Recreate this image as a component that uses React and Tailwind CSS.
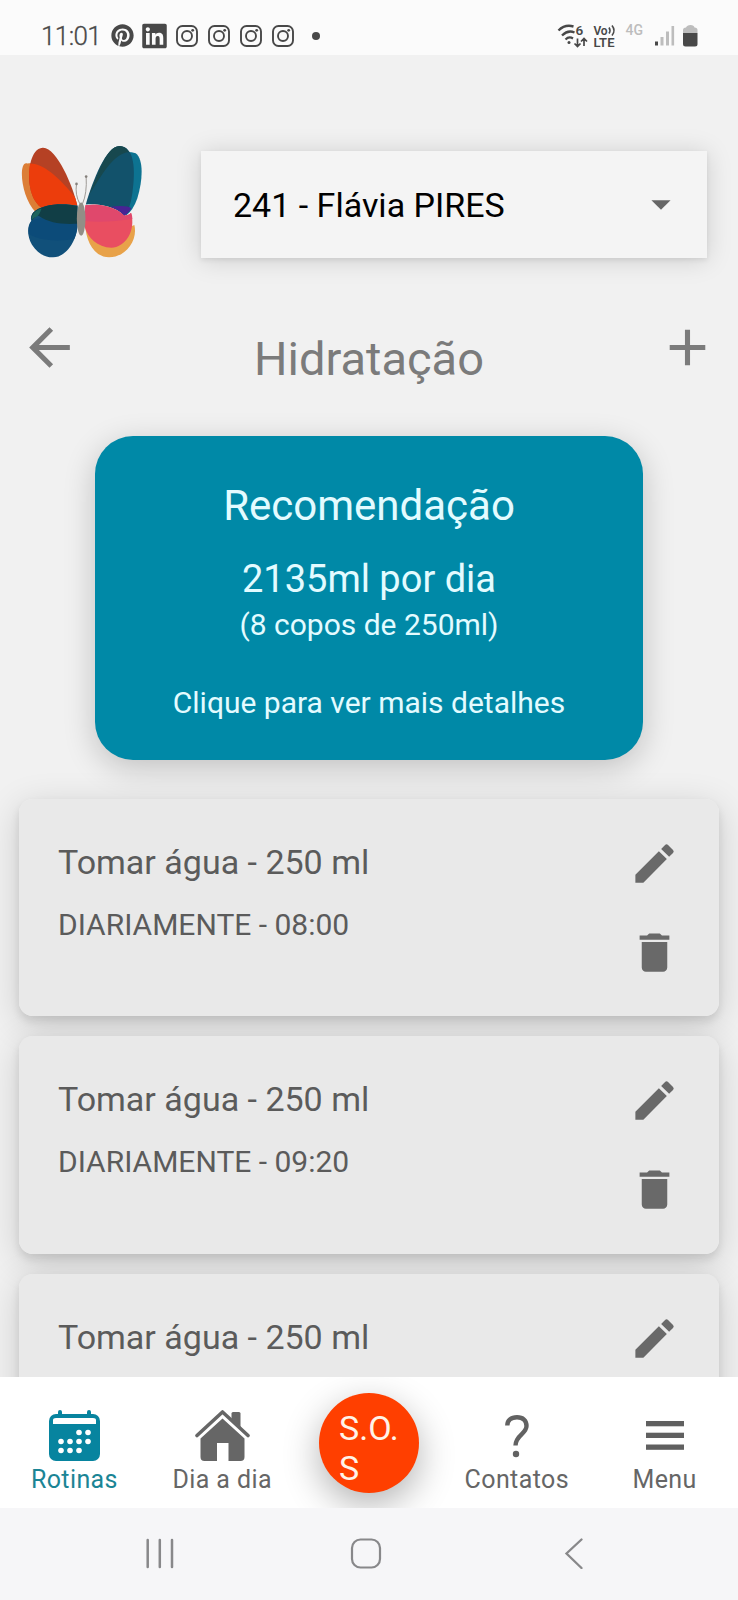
import { FaLinkedin, FaPinterest } from "react-icons/fa";
import { MdAdd, MdArrowBack, MdArrowDropDown, MdDelete, MdEdit } from "react-icons/md";

const routines = [
  { id: 1, title: "Tomar água - 250 ml", schedule: "DIARIAMENTE - 08:00" },
  { id: 2, title: "Tomar água - 250 ml", schedule: "DIARIAMENTE - 09:20" },
  { id: 3, title: "Tomar água - 250 ml" },
];

const InstagramIcon = () => (
  <svg viewBox="0 0 22 22" className="w-[22px] h-[22px]" fill="none" stroke="currentColor">
    <rect x="1" y="1" width="20" height="20" rx="5.5" strokeWidth="1.9" />
    <circle cx="11" cy="11" r="5" strokeWidth="1.9" />
    <circle cx="16.7" cy="5.3" r="1.4" fill="currentColor" stroke="none" />
  </svg>
);

const StatusBar = () => (
  <div className="h-[55px] shrink-0 bg-[#fbfbfb] flex items-center pt-4 pl-[41px] pr-[39px] text-[#484848]">
    <span className="w-[70px] text-[26px] leading-none font-light tracking-[-0.6px] [-webkit-text-stroke:0.3px]">11:01</span>
    <FaPinterest className="w-[23px] h-[23px]" />
    <FaLinkedin className="w-[25px] h-[28px] ml-[8px]" />
    <div className="flex gap-[10px] ml-[8.5px]">
      <InstagramIcon />
      <InstagramIcon />
      <InstagramIcon />
      <InstagramIcon />
    </div>
    <span className="w-2 h-2 rounded-full bg-current ml-[18px]" />
    <svg viewBox="0 0 142 26" className="w-[142px] h-[26px] ml-auto" fill="none" stroke="currentColor">
      {/* wifi */}
      <path d="M1.5 7.5 Q8 1 16.500 3.500" strokeWidth="2.4" />
      <path d="M5 12.5 Q11 6.500 17.500 9.500" strokeWidth="2.3" />
      <path d="M8.500 16.500 Q12 13 16 15.500" strokeWidth="2.2" />
      <circle cx="12" cy="19.500" r="1.5" fill="currentColor" stroke="none" />
      <path d="M20.500 15.500v7.500M17.500 20.500l3 3 3-3M27 23v-7.500M24 18.500l3-3 3 3" strokeWidth="1.7" />
      <text x="18.500" y="12" fontSize="13.500" fontWeight="600" fill="currentColor" stroke="none">6</text>
      {/* volte */}
      <text x="36.500" y="11.500" fontSize="12" fontWeight="600" fill="currentColor" stroke="none" textLength="14">Vo</text>
      <path d="M52 4.500q2 3 0 6M55 2.500q4 5 0 10" strokeWidth="1.6" />
      <text x="36.500" y="23.500" fontSize="13" fontWeight="600" fill="currentColor" stroke="none" textLength="21">LTE</text>
      <text x="68.500" y="12" fontSize="14" fontWeight="500" fill="#bdbdbd" stroke="none">4G</text>
      {/* signal */}
      <rect x="98" y="18.500" width="3" height="4" fill="currentColor" stroke="none" />
      <g fill="#bdbdbd" stroke="none">
        <rect x="103.500" y="14" width="3" height="8.500" />
        <rect x="109" y="8.500" width="3" height="14" />
        <rect x="114.500" y="3" width="2.600" height="19.500" />
      </g>
      {/* battery */}
      <path d="M126 10V7q0-2.500 3-2.500 1-2.500 4.500-2.500t4 2.500q3 0 3 2.500v3z" fill="#bdbdbd" stroke="none" />
      <path d="M126 10h14.500v11q0 2.500-2.500 2.500h-9.500q-2.500 0-2.500-2.500z" fill="currentColor" stroke="none" />
    </svg>
  </div>
);

const ButterflyLogo = () => (
  <svg viewBox="30 40 370 350" className="w-[123px] h-[117px] shrink-0">
    <defs>
      <clipPath id="leftUpper">
        <path d="M203 228C190 170 140 50 98 53C62 55 52 125 60 170C66 205 80 225 100 238Q150 215 203 228Z" />
      </clipPath>
      <clipPath id="rightUpper">
        <path d="M228 224C250 150 290 46 330 48C375 50 378 120 368 190Q360 245 344 257C310 225 260 222 228 224Z" />
      </clipPath>
    </defs>
    {/* upper left */}
    <path d="M78 248C30 200 25 90 52 101C90 95 130 120 190 190L120 240Z" fill="#dc7e36" />
    <path d="M203 228C190 170 140 50 98 53C62 55 52 125 60 170C66 205 80 225 100 238Q150 215 203 228Z" fill="#b54124" />
    <path d="M78 248C30 200 25 90 52 101C90 95 140 130 204 212L200 240Z" fill="#ec3d0c" clipPath="url(#leftUpper)" />
    {/* upper right */}
    <path d="M340 67Q360 64 378 70C402 88 400 150 383 205Q370 242 350 256L320 230Z" fill="#0d7391" />
    <path d="M228 224C250 150 290 46 330 48C375 50 378 120 368 190Q360 245 344 257C310 225 260 222 228 224Z" fill="#12526b" />
    <path d="M238 195C265 130 295 40 330 45Q348 48 358 66C310 72 280 130 238 195Z" fill="#17484e" clipPath="url(#rightUpper)" />
    {/* lower right */}
    <path d="M226 285C228 330 250 382 298 383C350 382 385 330 374 286L340 300Z" fill="#e8a249" />
    <path d="M228 226C260 222 310 225 344 257Q358 257 364 249C380 305 345 354 305 354C262 352 235 325 224 290Z" fill="#e94e61" />
    <path d="M226 226C255 222 310 225 344 257Q358 257 364 249Q368 258 368 268C320 275 270 278 225 274Z" fill="#e0486c" />
    <path d="M302 231Q350 225 365 235Q355 252 344 257Q325 238 302 231Z" fill="#482394" />
    {/* lower left */}
    <path d="M203 228C160 218 95 222 70 248C62 256 62 268 64 274C50 290 52 320 66 345C82 370 105 384 130 383C175 382 205 320 203 282Z" fill="#11507a" />
    <path d="M64 274Q54 290 56 312C90 335 150 335 193 328Q203 305 203 278L100 262Z" fill="#0c4b79" />
    <path d="M203 228C160 218 95 222 70 248C64 254 63 266 67 272Q76 258 86 258C120 280 150 284 203 282Z" fill="#113e46" />
    <path d="M67 257Q76 240 95 236Q91 250 82 260Q72 262 66 270Q64 262 67 257Z" fill="#1c645f" />
    <path d="M210 222Q195 195 200 162M218 222Q232 190 229 140" fill="none" stroke="#8c8782" strokeWidth="2.500" />
    <circle cx="200" cy="162" r="4" fill="#85807b" />
    <circle cx="229" cy="140" r="4" fill="#85807b" />
    <ellipse cx="214" cy="268" rx="13" ry="50" fill="#928e86" />
  </svg>
);

// shadow sits on the wrapper so it never falls on the neighbouring card
const RoutineCard = ({ item }) => (
  <div className="h-[217.3px] shrink-0 rounded-[14px] shadow-[0_5px_8px_rgba(0,0,0,0.1),0_8px_36px_rgba(0,0,0,0.16)]">
    <div className="relative z-10 h-full flex justify-between rounded-[14px] bg-[#e9e9e9] px-[39px]">
      <div className="pt-[43px] text-[#5b5b5b]">
        <h3 className="text-[34px] leading-10">{item.title}</h3>
        {item.schedule && <p className="mt-[23px] text-[30px] leading-10">{item.schedule}</p>}
      </div>
      <div className="flex flex-col items-center gap-[38px] pt-[39px] text-[#696969]">
        <button>
          <MdEdit className="w-[51px] h-[51px]" />
        </button>
        <button>
          <MdDelete className="w-[51px] h-[51px]" />
        </button>
      </div>
    </div>
  </div>
);

const CalendarIcon = () => (
  <svg viewBox="0 0 51 51" className="w-[51px] h-[51px]">
    <rect x="0" y="4" width="51" height="47" rx="7" fill="#07849f" />
    <path d="M11 6V2M40 6V2" stroke="#07849f" strokeWidth="4" strokeLinecap="round" />
    <path d="M4 14V10Q4 8 7 8H44Q47 8 47 10V14Z" fill="#fff" />
    <g fill="#fff">
      <circle cx="30" cy="22.500" r="2.800" />
      <circle cx="39" cy="22.500" r="2.800" />
      <circle cx="12" cy="31.500" r="2.800" />
      <circle cx="21" cy="31.500" r="2.800" />
      <circle cx="30" cy="31.500" r="2.800" />
      <circle cx="39" cy="31.500" r="2.800" />
      <circle cx="12" cy="40.500" r="2.800" />
      <circle cx="21" cy="40.500" r="2.800" />
      <circle cx="30" cy="40.500" r="2.800" />
    </g>
  </svg>
);

const HomeIcon = () => (
  <svg viewBox="0 0 55 51" className="w-[55px] h-[51px]" fill="#666">
    <path d="M36.500 3.500Q36.500 2 38 2H44Q45.500 2 45.500 3.500V19L36.500 10Z" />
    <path d="M2 25.500L27.500 2L53 25.500" fill="none" stroke="#666" strokeWidth="3.600" strokeLinecap="round" strokeLinejoin="round" />
    <path d="M27.500 8.500L49.500 28.500V47Q49.500 51 45.500 51H33.500V33H22V51H9.500Q5.500 51 5.500 47V28.500Z" />
  </svg>
);

const QuestionIcon = () => (
  <svg viewBox="0 0 24 51" className="w-6 h-[51px]" fill="none" stroke="#626262">
    <path d="M2.300 15.500C2.300 10.500 6 7.300 12 7.300C18 7.300 21.500 10.500 21.500 16C21.500 24 10.500 25 10.500 35.500" strokeWidth="4.400" />
    <circle cx="11" cy="44" r="3.200" fill="#626262" stroke="none" />
  </svg>
);

const MenuIcon = () => (
  <svg viewBox="0 0 38 51" className="w-[38px] h-[51px]" fill="#606060">
    <rect y="11" width="38" height="5.300" />
    <rect y="22.700" width="38" height="5.300" />
    <rect y="34.500" width="38" height="5.300" />
  </svg>
);

const NavItem = ({ icon, label, active }) => (
  <button className={`flex-1 flex flex-col items-center pt-[33px] pl-px ${active ? "text-[#1b8595]" : "text-[#666]"}`}>
    {icon}
    <span className="mt-[3.5px] text-[25px] leading-[30px] tracking-[0.4px]">{label}</span>
  </button>
);

const BottomNav = () => (
  <nav className="h-[131px] shrink-0 flex bg-white relative overflow-hidden">
    <NavItem icon={<CalendarIcon />} label="Rotinas" active />
    <NavItem icon={<HomeIcon />} label="Dia a dia" />
    <div className="flex-1 flex justify-center pt-[15.5px]">
      <button className="w-[100px] h-[100px] rounded-full bg-[#ff3f00] pl-[20px] pt-[11px] text-left text-[34px] leading-10 text-[#fff3e8] shadow-[0_12px_36px_rgba(0,0,0,0.3)]">
        S.O.
        <br />S
      </button>
    </div>
    <NavItem icon={<QuestionIcon />} label="Contatos" />
    <NavItem icon={<MenuIcon />} label="Menu" />
  </nav>
);

const SystemNav = () => (
  <div className="h-[92px] shrink-0 bg-[#f6f6f8] flex items-start pt-[29px] pl-[145px]">
    <svg viewBox="0 0 30 32" className="w-[30px] h-8" stroke="#88888a" strokeWidth="2.500" strokeLinecap="round">
      <path d="M2.700 3V30M14.800 3V30M27 3V30" />
    </svg>
    <svg viewBox="0 0 32 32" className="w-8 h-8 ml-[175px]" fill="none" stroke="#88888a" strokeWidth="2.200">
      <rect x="2" y="2.500" width="28" height="28" rx="8.500" />
    </svg>
    <svg viewBox="0 0 20 32" className="w-5 h-8 ml-[182px]" fill="none" stroke="#88888a" strokeWidth="2.300" strokeLinecap="round">
      <path d="M17.500 2.500L2.500 16.500L17.500 31" />
    </svg>
  </div>
);

export default function App() {
  return (
    <div className="w-[738px] h-[1600px] flex flex-col overflow-hidden bg-[#f1f1f1] font-['Roboto',sans-serif]">
      <StatusBar />
      <main className="flex-1 min-h-0 overflow-hidden flex flex-col">
        <header className="shrink-0 flex items-center pt-[88px] pl-5 pr-[31px]">
          <ButterflyLogo />
          <button className="ml-[58px] mt-[5px] flex-1 h-[107px] flex items-center justify-between bg-[#f4f4f4] pl-[32px] pr-[23px] shadow-[0_2px_24px_rgba(0,0,0,0.15),0_2px_5px_rgba(0,0,0,0.08)]">
            <span className="pt-[2px] text-[34px] leading-none text-black">241 - Flávia PIRES</span>
            <MdArrowDropDown className="w-[46px] h-[46px] text-[#666]" />
          </button>
        </header>

        <div className="mt-[57px] h-[92px] shrink-0 flex justify-between pl-[19px] pr-5 text-[#7b7b7b]">
          <button className="h-[61px]">
            <MdArrowBack className="w-[61px] h-[61px]" />
          </button>
          <h1 className="pl-px pt-[17px] text-[47px] leading-[50px]">Hidratação</h1>
          <button className="h-[61px]">
            <MdAdd className="w-[61px] h-[61px]" />
          </button>
        </div>

        <section className="mt-[27px] mx-[95px] h-[324px] shrink-0 rounded-[38px] bg-[#0089a7] text-center text-[#e3fbff] pt-[45px] shadow-[0_8px_32px_rgba(0,0,0,0.2)]">
          <h2 className="text-[42px] leading-[50px]">Recomendação</h2>
          <p className="mt-[26px] text-[38px] leading-[44px]">2135ml por dia</p>
          <p className="mt-[4px] text-[30px] leading-[40px]">(8 copos de 250ml)</p>
          <p className="mt-[38px] text-[30px] leading-[40px]">Clique para ver mais detalhes</p>
        </section>

        <div className="mt-[39px] mx-[19px] flex flex-col gap-5">
          {routines.map((item) => (
            <RoutineCard key={item.id} item={item} />
          ))}
        </div>
      </main>
      <BottomNav />
      <SystemNav />
    </div>
  );
}
